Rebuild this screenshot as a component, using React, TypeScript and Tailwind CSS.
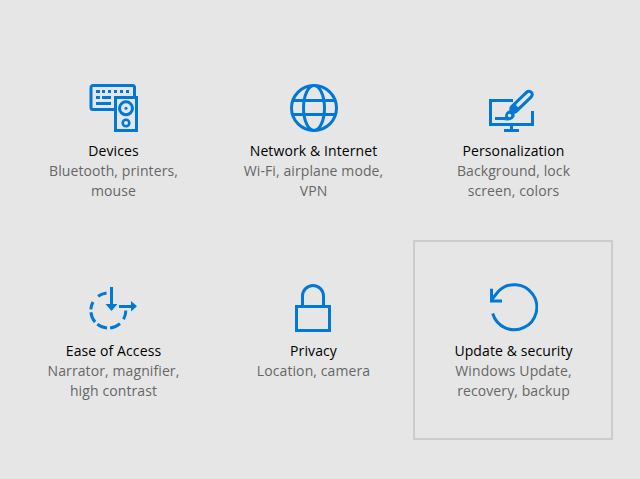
const BLUE = '#0078d7';

function Devices() {
  return (
    <svg width="50" height="50" viewBox="0 0 50 50" fill="none" stroke={BLUE} strokeWidth="3">
      <path d="M26 26.500H5a2 2 0 0 1-2-2V4.500a2 2 0 0 1 2-2h40a2 2 0 0 1 1.500 2V13" />
      <rect x="27.500" y="14.500" width="21" height="33" fill="#e6e6e6" />
      <circle cx="38" cy="25.300" r="6.500" />
      <circle cx="38" cy="25.300" r="1.500" fill={BLUE} stroke="none" />
      <circle cx="38" cy="40" r="3.300" strokeWidth="2.600" />
      <g fill={BLUE} stroke="none">
        <rect x="8" y="7" width="4" height="3" />
        <rect x="14" y="7" width="3" height="3" />
        <rect x="20" y="7" width="3" height="3" />
        <rect x="26" y="7" width="3" height="3" />
        <rect x="32" y="7" width="3" height="3" />
        <rect x="38" y="7" width="3" height="3" />
        <rect x="8" y="13" width="4" height="3" />
        <rect x="14" y="13" width="9" height="3" />
        <rect x="8" y="19" width="15" height="3" />
      </g>
    </svg>
  );
}

function Globe() {
  return (
    <svg width="50" height="50" viewBox="0 0 50 50" fill="none" stroke={BLUE} strokeWidth="3">
      <circle cx="26" cy="25" r="22.500" />
      <ellipse cx="26" cy="25" rx="10.500" ry="22.500" />
      <path d="M4 17.500H48M4 31.500H48" />
    </svg>
  );
}

function Brush() {
  return (
    <svg width="50" height="50" viewBox="0 0 50 50" fill="none" stroke={BLUE} strokeWidth="3">
      <path d="M25 17.500H2.500V41.500H44.500V28" />
      <path d="M23.500 42V48M16 47.500H31" />
      <path d="M7 35.500H17" />
      <path d="M26 26L41 11.500" strokeWidth="9.500" strokeLinecap="round" />
      <path d="M30 22L41 11.500" stroke="#e6e6e6" strokeWidth="3.500" strokeLinecap="round" />
      <path d="M15.500 36.500C18.500 35.500 16.500 29 21 28C24.500 27.300 26.800 30.500 26 33.500C25 36.800 20 37.500 15.500 36.500Z" fill={BLUE} strokeWidth="1" />
      <circle cx="21.500" cy="32.500" r="1.700" fill="#e6e6e6" stroke="none" />
    </svg>
  );
}

function Ease() {
  return (
    <svg width="50" height="50" viewBox="0 0 50 50" fill="none" stroke={BLUE} strokeWidth="3">
      <circle cx="20.300" cy="27.500" r="17.500" pathLength="360" strokeDasharray="30 18 36 10 35 10 35 10 25 25 30 96" />
      <path d="M23.500 4V23" />
      <path d="M17.500 21H29.500L23.500 28Z" fill={BLUE} stroke="none" />
      <path d="M31 23.500H44" />
      <path d="M43 18V28.500L49 23.250Z" fill={BLUE} stroke="none" />
    </svg>
  );
}

function Lock() {
  return (
    <svg width="50" height="50" viewBox="0 0 50 50" fill="none" stroke={BLUE} strokeWidth="3">
      <rect x="8.500" y="23.500" width="33" height="24" />
      <path d="M14.500 22V13A10.500 10.500 0 0 1 35.500 13V22" />
    </svg>
  );
}

function Restart() {
  return (
    <svg width="50" height="50" viewBox="0 0 50 50" fill="none" stroke={BLUE} strokeWidth="3">
      <path d="M4.700 30.500A22.500 22.500 0 1 0 10.400 8.300L3.500 17" />
      <path d="M3.500 5.700V18H14" />
    </svg>
  );
}

interface Category {
  title: string;
  lines: string[];
  icon: React.ReactNode;
  selected?: boolean;
}

const categories: Category[] = [
  { title: 'Devices', lines: ['Bluetooth, printers,', 'mouse'], icon: <Devices /> },
  { title: 'Network & Internet', lines: ['Wi-Fi, airplane mode,', 'VPN'], icon: <Globe /> },
  { title: 'Personalization', lines: ['Background, lock', 'screen, colors'], icon: <Brush /> },
  { title: 'Ease of Access', lines: ['Narrator, magnifier,', 'high contrast'], icon: <Ease /> },
  { title: 'Privacy', lines: ['Location, camera'], icon: <Lock /> },
  { title: 'Update & security', lines: ['Windows Update,', 'recovery, backup'], icon: <Restart />, selected: true },
];

export default function App() {
  return (
    <div className="h-[479px] overflow-hidden bg-[#e6e6e6] pt-10 pl-[13px] font-['Open_Sans','Liberation_Sans',sans-serif]">
      <div className="grid grid-cols-[repeat(3,200px)] auto-rows-[200px]">
        {categories.map((c) => (
          <div
            key={c.title}
            className={`flex flex-col items-center border-2 pt-[41px] text-center text-[14px] leading-5 tracking-[0.1px] ${
              c.selected ? 'border-[#cccccc]' : 'border-transparent'
            }`}
          >
            {c.icon}
            <div className="mt-2 pl-px text-black whitespace-nowrap">{c.title}</div>
            {c.lines.map((l) => (
              <div key={l} className="pl-px text-[#666666] whitespace-nowrap">{l}</div>
            ))}
          </div>
        ))}
      </div>
    </div>
  );
}
